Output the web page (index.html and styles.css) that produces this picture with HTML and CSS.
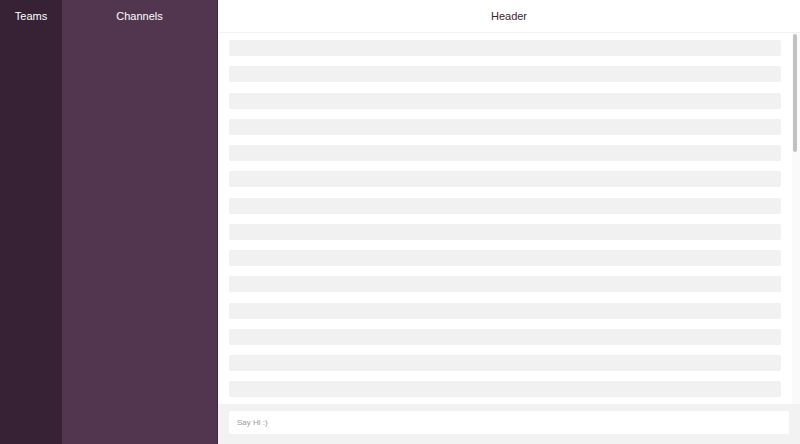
FILE: index.html
```html
<!DOCTYPE html>
<html>
<head>
<meta charset="utf-8">
<link rel="stylesheet" href="styles.css">
</head>
<body>
<div class="app">
  <aside class="teams"><div class="col-title">Teams</div></aside>
  <aside class="channels"><div class="col-title">Channels</div></aside>
  <main class="main">
    <header class="header">Header</header>
    <div class="messages">
      <ul class="list">
        <li></li><li></li><li></li><li></li><li></li><li></li><li></li><li></li><li></li><li></li>
        <li></li><li></li><li></li><li></li><li></li><li></li><li></li><li></li><li></li><li></li>
      </ul>
      <div class="scrollbar"><div class="thumb"></div></div>
    </div>
    <div class="composer">
      <input class="input" type="text" placeholder="Say Hi :)">
    </div>
  </main>
</div>
</body>
</html>
```
FILE: styles.css
```css
* { box-sizing: border-box; }
html, body { margin: 0; padding: 0; height: 100%; }
body { font-family: "Liberation Sans", Arial, sans-serif; overflow: hidden; }
.app { display: grid; grid-template-columns: 62px 156px 1fr; height: 444px; }
.teams { background: #362234; }
.channels { background: #52364f; border-right: 1px solid #3d2a3b; }
.col-title { color: #fff; font-size: 11px; text-align: center; height: 32px; line-height: 32px; }
.main { display: flex; flex-direction: column; height: 444px; min-width: 0; background: #fff; }
.header { height: 33px; line-height: 32px; text-align: center; font-size: 11px; color: #3a2337; border-bottom: 1px solid #f1f1f1; flex: none; }
.messages { flex: 1; display: flex; min-height: 0; overflow: hidden; }
.list { flex: 1; list-style: none; margin: 0; padding: 7px 11px 0 11px; display: flex; flex-direction: column; gap: 10.25px; overflow: hidden; }
.list li { flex: none; height: 16px; background: #f1f1f1; border-radius: 2px; }
.scrollbar { flex: none; width: 8px; background: #fafafa; padding: 1px 3px 0 1px; }
.thumb { height: 118px; background: #c1c1c1; border-radius: 2px; }
.composer { flex: none; height: 40px; background: #f2f2f2; padding: 7px 11px 0 11px; }
.input { display: block; width: 100%; height: 23px; border: none; border-radius: 2px; background: #fff; padding: 0 8px; font-family: "Liberation Sans", Arial, sans-serif; font-size: 8px; color: #333; outline: none; }
.input::placeholder { color: #9a9a9a; }
```
